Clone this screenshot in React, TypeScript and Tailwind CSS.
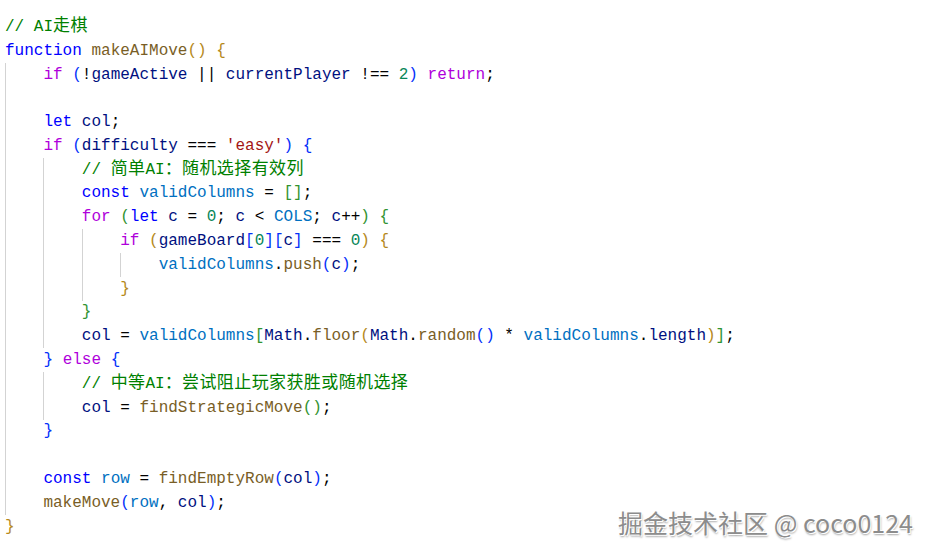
import React from 'react';

type Tok = [string, string];

const C = {
  kw: 'text-[#0000ff]',
  ctl: 'text-[#af00db]',
  fn: 'text-[#795e26]',
  v: 'text-[#001080]',
  cst: 'text-[#0070c1]',
  num: 'text-[#098658]',
  str: 'text-[#a31515]',
  cm: 'text-[#008000]',
  cjk: 'text-[#008000] text-[17px] tracking-[0.4px]',
  op: 'text-[#000000]',
  b1: 'text-[#b5891b]',
  b2: 'text-[#0431fa]',
  b3: 'text-[#319331]'
};

interface Line {
  indent: number;
  toks: Tok[];
}

const lines: Line[] = [
  { indent: 0, toks: [['// AI', C.cm], ['走棋', C.cjk]] },
  { indent: 0, toks: [['function', C.kw], [' ', C.op], ['makeAIMove', C.fn], ['()', C.b1], [' ', C.op], ['{', C.b1]] },
  { indent: 1, toks: [['if', C.ctl], [' ', C.op], ['(', C.b2], ['!', C.op], ['gameActive', C.v], [' || ', C.op], ['currentPlayer', C.v], [' !== ', C.op], ['2', C.num], [')', C.b2], [' ', C.op], ['return', C.ctl], [';', C.op]] },
  { indent: 1, toks: [] },
  { indent: 1, toks: [['let', C.kw], [' ', C.op], ['col', C.v], [';', C.op]] },
  { indent: 1, toks: [['if', C.ctl], [' ', C.op], ['(', C.b2], ['difficulty', C.v], [' === ', C.op], ["'easy'", C.str], [')', C.b2], [' ', C.op], ['{', C.b2]] },
  { indent: 2, toks: [['// ', C.cm], ['简单', C.cjk], ['AI', C.cm], ['：随机选择有效列', C.cjk]] },
  { indent: 2, toks: [['const', C.kw], [' ', C.op], ['validColumns', C.cst], [' = ', C.op], ['[]', C.b3], [';', C.op]] },
  { indent: 2, toks: [['for', C.ctl], [' ', C.op], ['(', C.b3], ['let', C.kw], [' ', C.op], ['c', C.v], [' = ', C.op], ['0', C.num], ['; ', C.op], ['c', C.v], [' < ', C.op], ['COLS', C.cst], ['; ', C.op], ['c', C.v], ['++', C.op], [')', C.b3], [' ', C.op], ['{', C.b3]] },
  { indent: 3, toks: [['if', C.ctl], [' ', C.op], ['(', C.b1], ['gameBoard', C.v], ['[', C.b2], ['0', C.num], [']', C.b2], ['[', C.b2], ['c', C.v], [']', C.b2], [' === ', C.op], ['0', C.num], [')', C.b1], [' ', C.op], ['{', C.b1]] },
  { indent: 4, toks: [['validColumns', C.cst], ['.', C.op], ['push', C.fn], ['(', C.b2], ['c', C.v], [')', C.b2], [';', C.op]] },
  { indent: 3, toks: [['}', C.b1]] },
  { indent: 2, toks: [['}', C.b3]] },
  { indent: 2, toks: [['col', C.v], [' = ', C.op], ['validColumns', C.cst], ['[', C.b3], ['Math', C.v], ['.', C.op], ['floor', C.fn], ['(', C.b1], ['Math', C.v], ['.', C.op], ['random', C.fn], ['()', C.b2], [' * ', C.op], ['validColumns', C.cst], ['.', C.op], ['length', C.v], [')', C.b1], [']', C.b3], [';', C.op]] },
  { indent: 1, toks: [['}', C.b2], [' ', C.op], ['else', C.ctl], [' ', C.op], ['{', C.b2]] },
  { indent: 2, toks: [['// ', C.cm], ['中等', C.cjk], ['AI', C.cm], ['：尝试阻止玩家获胜或随机选择', C.cjk]] },
  { indent: 2, toks: [['col', C.v], [' = ', C.op], ['findStrategicMove', C.fn], ['()', C.b3], [';', C.op]] },
  { indent: 1, toks: [['}', C.b2]] },
  { indent: 1, toks: [] },
  { indent: 1, toks: [['const', C.kw], [' ', C.op], ['row', C.cst], [' = ', C.op], ['findEmptyRow', C.fn], ['(', C.b2], ['col', C.v], [')', C.b2], [';', C.op]] },
  { indent: 1, toks: [['makeMove', C.fn], ['(', C.b2], ['row', C.cst], [', ', C.op], ['col', C.v], [')', C.b2], [';', C.op]] },
  { indent: 0, toks: [['}', C.b1]] }
];

const CodeLine = ({ line }: { line: Line }) => {
  const guides = Array.from({ length: line.indent });
  return <div className="flex h-[23.8px] items-center whitespace-pre">
      {guides.map((_, i) => <span key={i} className="w-[4ch] h-full shrink-0 border-l border-[#d3d3d3]"></span>)}
      <span>
        {line.toks.map(([t, cls], i) => <span key={i} className={cls}>{t}</span>)}
      </span>
    </div>;
};

const App = () => {
  return <div className="relative w-[931px] h-[549px] overflow-hidden bg-white">
      <div className="pt-[15px] pl-[5px] text-[16px] font-['Liberation_Mono','Noto_Sans_CJK_SC',monospace]">
        {lines.map((l, i) => <CodeLine key={i} line={l} />)}
      </div>
      <div className="absolute right-[18px] bottom-[14px] leading-none text-[25px] text-[#8c8c8c] font-['Noto_Sans_CJK_SC',sans-serif] [text-shadow:1px_1px_0_#ffffff,-1px_-1px_0_#ffffff,1px_2px_2px_rgba(0,0,0,0.35)]">
        掘金技术社区 @ coco0124
      </div>
    </div>;
};

export default App;
